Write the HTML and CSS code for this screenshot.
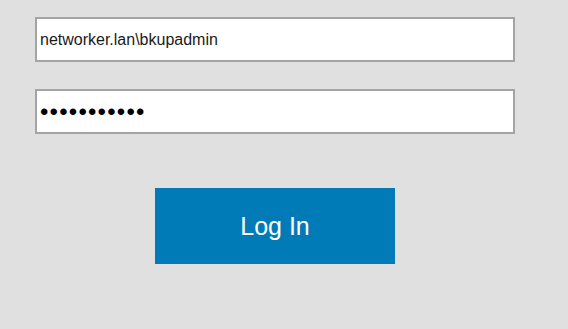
FILE: index.html
```html
<!DOCTYPE html>
<html lang="en">
<head>
    <meta charset="UTF-8">
    <meta name="viewport" content="width=device-width, initial-scale=1.0">
    <title>Log In</title>
    <link rel="stylesheet" href="styles.css">
</head>
<body>
    <form class="login-form">
        <input class="field" type="text" value="networker.lan\bkupadmin">
        <input class="field password" type="password" value="secretpass1">
        <button class="login-btn" type="button">Log In</button>
    </form>
</body>
</html>
```

FILE: styles.css
```css
body {
    margin: 0;
    background-color: #e0e0e0;
    font-family: 'Liberation Sans', Arial, sans-serif;
}

.login-form {
    display: flex;
    flex-direction: column;
    width: 480px;
    padding: 17px 0 0 35px;
}

.field {
    box-sizing: border-box;
    height: 45px;
    width: 480px;
    margin: 0 0 27px 0;
    padding: 0 0 0 3px;
    border: 2px solid #a4a4a4;
    background-color: white;
    font-family: 'Liberation Sans', Arial, sans-serif;
    font-size: 16px;
    color: #1a1a1a;
    outline: none;
}

.password {
    font-size: 24px;
    letter-spacing: 1.2px;
    color: black;
}

.login-btn {
    align-self: center;
    width: 240px;
    height: 76px;
    margin-top: 27px;
    border: none;
    background-color: #007bb8;
    color: white;
    font-family: 'Liberation Sans', Arial, sans-serif;
    font-size: 25px;
    cursor: pointer;
}
```
